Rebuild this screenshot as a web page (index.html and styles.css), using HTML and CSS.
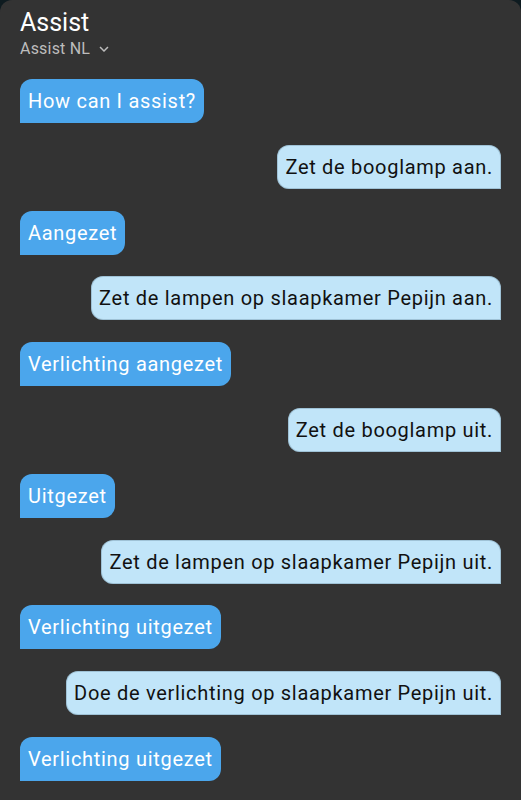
FILE: index.html
```html
<!DOCTYPE html>
<html>
<head>
<meta charset="utf-8">
<link rel="stylesheet" href="styles.css">
</head>
<body>
<div class="dialog">
  <header class="header">
    <div class="title">Assist</div>
    <div class="pipeline">Assist NL
      <svg class="chev" width="18" height="18" viewBox="0 0 24 24"><path d="M7.41 8.58L12 13.17l4.59-4.59L18 10l-6 6-6-6z" fill="currentColor"/></svg>
    </div>
  </header>
  <div class="messages">
    <div class="msg hass">How can I assist?</div>
    <div class="msg user">Zet de booglamp aan.</div>
    <div class="msg hass">Aangezet</div>
    <div class="msg user">Zet de lampen op slaapkamer Pepijn aan.</div>
    <div class="msg hass">Verlichting aangezet</div>
    <div class="msg user">Zet de booglamp uit.</div>
    <div class="msg hass">Uitgezet</div>
    <div class="msg user">Zet de lampen op slaapkamer Pepijn uit.</div>
    <div class="msg hass">Verlichting uitgezet</div>
    <div class="msg user">Doe de verlichting op slaapkamer Pepijn uit.</div>
    <div class="msg hass">Verlichting uitgezet</div>
  </div>
</div>
</body>
</html>
```
FILE: styles.css
```css
html, body {
  margin: 0;
  padding: 0;
  background: #0e1b20;
  height: 100%;
  overflow: hidden;
}
body {
  font-family: Roboto, "Noto Sans", sans-serif;
}
.dialog {
  background: #333333;
  border-radius: 12px 12px 0 0;
  height: 800px;
  box-sizing: border-box;
  padding: 0 20px;
}
.header {
  padding-top: 7px;
}
.title {
  color: #ffffff;
  font-size: 25px;
  line-height: 32px;
}
.pipeline {
  color: #bdbdbd;
  font-size: 16px;
  line-height: 18px;
  letter-spacing: 0.2px;
  display: flex;
  align-items: center;
  gap: 5px;
}
.chev {
  margin-top: 1px;
}
.messages {
  display: flex;
  flex-direction: column;
  gap: 21.8px;
  padding-top: 21px;
}
.msg {
  font-size: 20px;
  line-height: 28px;
  padding: 8px 8px;
  border-radius: 12px;
  letter-spacing: 0.7px;
}
.hass {
  align-self: flex-start;
  background: #4ba6ec;
  color: #ffffff;
  border-bottom-left-radius: 0;
}
.user {
  align-self: flex-end;
  background: #c1e5f9;
  color: #111111;
  border-bottom-right-radius: 0;
  box-shadow: inset 0 0 0 1px rgba(60,90,110,0.25);
}
```
